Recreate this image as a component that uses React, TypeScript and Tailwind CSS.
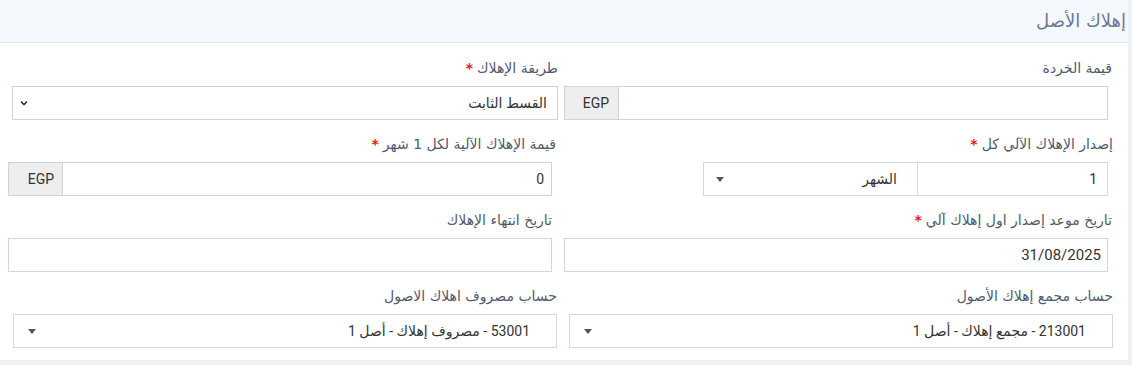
import React from 'react';

const FONT = "font-['Roboto','DejaVu_Sans',sans-serif]";

const Caret = () => (
    <span className="w-0 h-0 border-l-[4px] border-r-[4px] border-t-[5px] border-l-transparent border-r-transparent border-t-[#555]" />
);

const Label: React.FC<{ text: string; required?: boolean; flush?: boolean }> = ({ text, required, flush }) => (
    <div className={`h-[20px] mb-[8px] text-[14px] leading-[20px] text-[#4f5a6e] whitespace-nowrap font-['DejaVu_Sans',sans-serif] ${flush ? '' : 'mr-[-4px]'}`}>
        {text}
        {required && <span className="text-[#e7191b] mr-[4px] font-bold">*</span>}
    </div>
);

const Addon: React.FC<{ pad: string }> = ({ pad }) => (
    <div className={`w-[55px] shrink-0 h-full bg-[#eeeeee] border border-[#cdd5db] flex items-center justify-start ${pad} text-[14px] text-[#333]`}>
        EGP
    </div>
);

const Select2: React.FC<{ value: string }> = ({ value }) => (
    <div className="h-[34px] border border-[#d2dadf] bg-white flex items-center justify-between pr-[26px] pl-[14px] text-[14px] text-[#333]">
        <span>{value}</span>
        <Caret />
    </div>
);

export default function App() {
    return (
        <div dir="rtl" className={`${FONT} w-[1132px] h-[365px] bg-[#eef1f5] overflow-hidden`}>
            <div className="w-[1128px] h-[360px] mr-[4px] bg-white">
                {/* header */}
                <div className="h-[43px] bg-[#f5f8fc] border-b border-[#e3e8ee] pr-[2px] pt-[8px] leading-[26px] text-[18px] text-[#6a7a99] font-['DejaVu_Sans',sans-serif]">
                    <span>إهلاك الأصل</span>
                </div>

                <div className="grid grid-cols-2 gap-x-[12px] gap-y-[14px] pr-[20px] pl-[8px] pt-[15px]">
                    {/* row 1 */}
                    <div>
                        <Label text="قيمة الخردة" />
                        <div className="h-[34px] flex">
                            <div className="flex-1 border border-[#cdd5db] border-l-0" />
                            <Addon pad="pr-[9px]" />
                        </div>
                    </div>
                    <div className="mr-[-6px] ml-[4px]">
                        <Label text="طريقة الإهلاك" required flush />
                        <div className="h-[34px] border border-[#cdd5db] flex items-center justify-between pr-[10px] pl-[6px] text-[14px] text-[#333]">
                            <span>القسط الثابت</span>
                            <svg width="10" height="10" viewBox="0 0 10 10">
                                <path d="M2 3.5 L5 6.5 L8 3.5" stroke="#333" strokeWidth="1.6" fill="none" />
                            </svg>
                        </div>
                    </div>

                    {/* row 2 */}
                    <div className="mr-[-5px] ml-[5px]">
                        <Label text="إصدار الإهلاك الآلي كل" required flush />
                        <div className="h-[34px] flex mr-[5px] w-[405px]">
                            <div className="w-[191px] border border-[#d2dadf] flex items-center pr-[10px] text-[14px] text-[#333]">1</div>
                            <div className="flex-1 border border-[#d2dadf] border-r-0 flex items-center justify-between pr-[20px] pl-[12px] text-[14px] text-[#333]">
                                <span>الشهر</span>
                                <Caret />
                            </div>
                        </div>
                    </div>
                    <div>
                        <Label text="قيمة الإهلاك الآلية لكل 1 شهر" required />
                        <div className="h-[34px] flex">
                            <div className="flex-1 border border-[#cdd5db] border-l-0 flex items-center pr-[7px] text-[14px] text-[#333]">0</div>
                            <Addon pad="pr-[8px]" />
                        </div>
                    </div>

                    {/* row 3 */}
                    <div>
                        <Label text="تاريخ موعد إصدار اول إهلاك آلي" required />
                        <div className="h-[34px] border border-[#cdd8dc] flex items-center pr-[6px] text-[15px] text-[#333]">31/08/2025</div>
                    </div>
                    <div>
                        <Label text="تاريخ انتهاء الإهلاك" flush />
                        <div className="h-[34px] border border-[#cdd8dc]" />
                    </div>

                    {/* row 4 */}
                    <div className="mr-[-5px] ml-[5px]">
                        <Label text="حساب مجمع إهلاك الأصول" flush />
                        <Select2 value="213001 - مجمع إهلاك - أصل 1" />
                    </div>
                    <div className="mr-[-5px] ml-[5px]">
                        <Label text="حساب مصروف اهلاك الاصول" flush />
                        <Select2 value="53001 - مصروف إهلاك - أصل 1" />
                    </div>
                </div>
            </div>
        </div>
    );
}
